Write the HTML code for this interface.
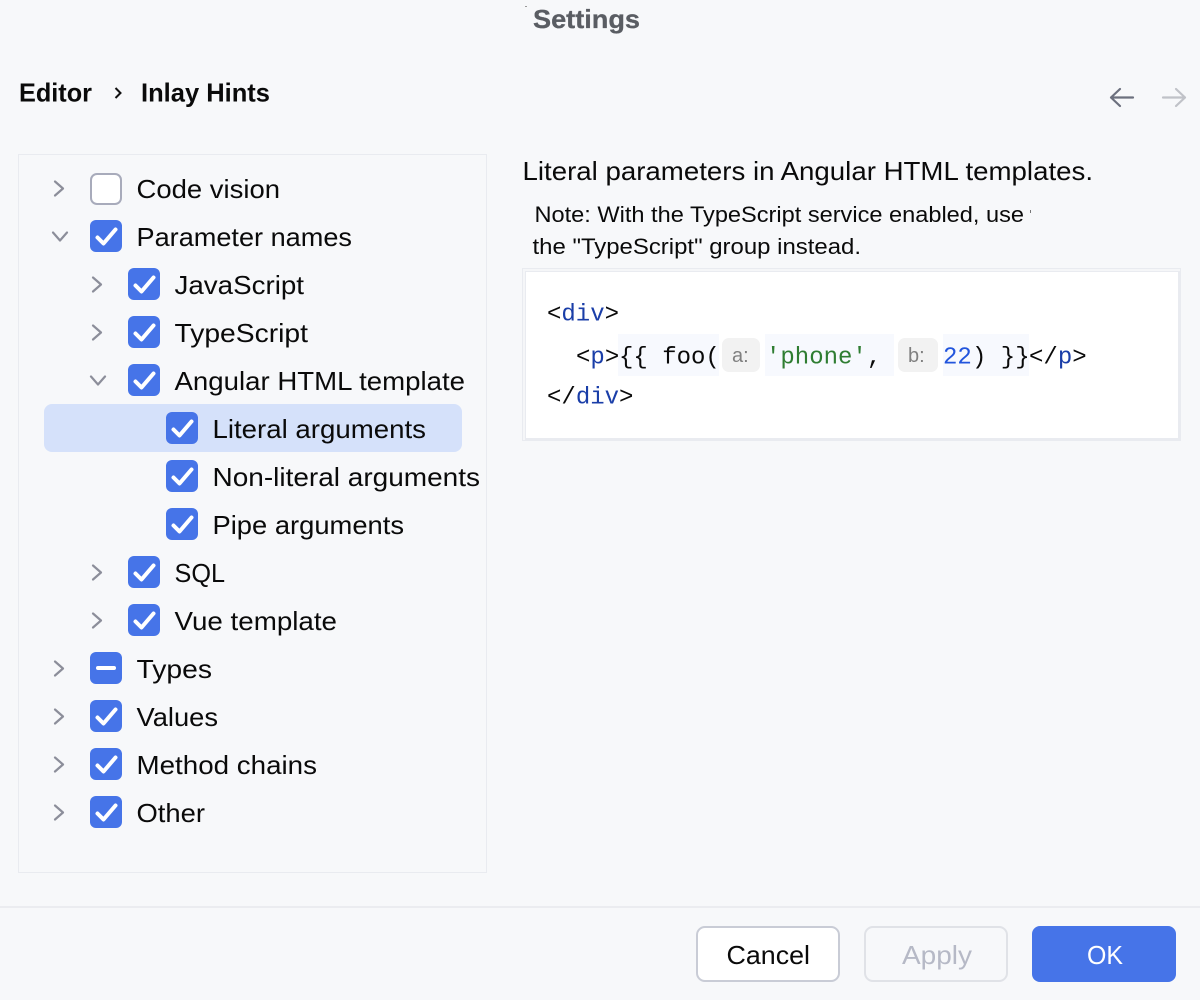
<!DOCTYPE html>
<html><head><meta charset="utf-8"><style>
html,body{margin:0;padding:0;background:#f7f8fa;width:1200px;height:1000px;overflow:hidden}
svg{display:block}
text{font-family:"Liberation Sans",sans-serif;font-size:26px;fill:#0a0a0a}
.m{font-family:"Liberation Mono",monospace;font-size:24px}
.t{fill:#1a3ea8}
.c{fill:none;stroke:#fff;stroke-width:4;stroke-linecap:round;stroke-linejoin:round}
.a{fill:none;stroke:#8c8e9a;stroke-width:2.2;stroke-linecap:round;stroke-linejoin:round}
</style></head><body>
<svg width="1200" height="1000" viewBox="0 0 1200 1000" xmlns="http://www.w3.org/2000/svg">
<defs>
<g id="ck"><rect width="32" height="32" rx="6" fill="#4674e8"/><path class="c" d="M7.500 17.500l6 6L25.500 9.500"/></g>
<path id="r" class="a" d="M-4-7L4 0L-4 7"/>
<path id="d" class="a" d="M-7-4L0 4L7-4"/>
</defs>
<rect width="1200" height="1000" fill="#f7f8fa"/>
<text x="533" y="28" font-weight="700" textLength="107" lengthAdjust="spacingAndGlyphs" style="fill:#5a5d63;stroke:#5a5d63;stroke-width:.3">Settings</text>
<rect x="525" y="6" width="2" height="1" fill="#999"/>
<text x="19" y="101.500" font-weight="700" textLength="73" lengthAdjust="spacingAndGlyphs">Editor</text>
<path d="M115.500 88l5 5-5 5" fill="none" stroke="#111" stroke-width="2"/>
<text x="141" y="101.500" font-weight="700" textLength="129" lengthAdjust="spacingAndGlyphs">Inlay Hints</text>
<path d="M1111 97.500h22M1120 89l-9 8.500 9 8.500" fill="none" stroke="#6c707e" stroke-width="2.200" stroke-linecap="round" stroke-linejoin="round"/>
<path d="M1163 97.500h22M1176 89l9 8.500-9 8.500" fill="none" stroke="#c0c2c8" stroke-width="2.200" stroke-linecap="round" stroke-linejoin="round"/>

<rect x="18.500" y="154.500" width="468" height="718" fill="#f7f8fa" stroke="#e9ebf0"/>
<rect x="44" y="404" width="418" height="48" rx="8" fill="#d5e1fa"/>

<use href="#r" x="59" y="188.500"/>
<rect x="91" y="174" width="30" height="30" rx="6" fill="#fff" stroke="#a8abbb" stroke-width="2"/>
<text x="136.500" y="198" textLength="143.500" lengthAdjust="spacingAndGlyphs">Code vision</text>

<use href="#d" x="60" y="236.500"/>
<use href="#ck" x="90" y="220"/>
<text x="136.500" y="246" textLength="215.500" lengthAdjust="spacingAndGlyphs">Parameter names</text>

<use href="#r" x="97" y="284.500"/>
<use href="#ck" x="128" y="268"/>
<text x="174.500" y="294" textLength="129.500" lengthAdjust="spacingAndGlyphs">JavaScript</text>

<use href="#r" x="97" y="332.500"/>
<use href="#ck" x="128" y="316"/>
<text x="174.500" y="342" textLength="133.500" lengthAdjust="spacingAndGlyphs">TypeScript</text>

<use href="#d" x="98" y="380.500"/>
<use href="#ck" x="128" y="364"/>
<text x="174.500" y="390" textLength="290.500" lengthAdjust="spacingAndGlyphs">Angular HTML template</text>

<use href="#ck" x="166" y="412"/>
<text x="212.500" y="438" textLength="213.500" lengthAdjust="spacingAndGlyphs">Literal arguments</text>

<use href="#ck" x="166" y="460"/>
<text x="212.500" y="486" textLength="267.500" lengthAdjust="spacingAndGlyphs">Non-literal arguments</text>

<use href="#ck" x="166" y="508"/>
<text x="212.500" y="534" textLength="191.500" lengthAdjust="spacingAndGlyphs">Pipe arguments</text>

<use href="#r" x="97" y="572.500"/>
<use href="#ck" x="128" y="556"/>
<text x="174.500" y="582" textLength="50.500" lengthAdjust="spacingAndGlyphs">SQL</text>

<use href="#r" x="97" y="620.500"/>
<use href="#ck" x="128" y="604"/>
<text x="174.500" y="630" textLength="162.500" lengthAdjust="spacingAndGlyphs">Vue template</text>

<use href="#r" x="59" y="668.500"/>
<rect x="90" y="652" width="32" height="32" rx="6" fill="#4674e8"/>
<rect x="96" y="666" width="20" height="4" rx="2" fill="#fff"/>
<text x="136.500" y="678" textLength="75.500" lengthAdjust="spacingAndGlyphs">Types</text>

<use href="#r" x="59" y="716.500"/>
<use href="#ck" x="90" y="700"/>
<text x="136.500" y="726" textLength="81.500" lengthAdjust="spacingAndGlyphs">Values</text>

<use href="#r" x="59" y="764.500"/>
<use href="#ck" x="90" y="748"/>
<text x="136.500" y="774" textLength="180.500" lengthAdjust="spacingAndGlyphs">Method chains</text>

<use href="#r" x="59" y="812.500"/>
<use href="#ck" x="90" y="796"/>
<text x="136.500" y="822" textLength="68.500" lengthAdjust="spacingAndGlyphs">Other</text>

<text x="522.500" y="180" textLength="570.500" lengthAdjust="spacingAndGlyphs">Literal parameters in Angular HTML templates.</text>
<text x="534.500" y="222" style="font-size:22px" textLength="489.500" lengthAdjust="spacingAndGlyphs">Note: With the TypeScript service enabled, use</text>
<rect x="1030" y="210" width="1" height="3" fill="#777"/>
<text x="532.500" y="254" style="font-size:22px" textLength="328.500" lengthAdjust="spacingAndGlyphs">the "TypeScript" group instead.</text>

<rect x="522.500" y="268.500" width="658" height="172" fill="#f5f6f8" stroke="#e9ebf0"/>
<rect x="525" y="271" width="655" height="169" fill="#e9ebf0"/>
<rect x="526" y="272" width="652" height="166" fill="#fff"/>
<rect x="618" y="334" width="101" height="42" fill="#f7f9fe"/>
<rect x="765" y="334" width="129" height="42" fill="#f7f9fe"/>
<rect x="943" y="334" width="86" height="42" fill="#f7f9fe"/>
<rect x="722" y="338" width="38" height="34" rx="7" fill="#f2f2f2"/>
<rect x="898" y="338" width="40" height="34" rx="7" fill="#f2f2f2"/>

<text class="m" x="547" y="320.500">&lt;<tspan class="t">div</tspan>&gt;</text>
<text class="m" x="576" y="363.500">&lt;<tspan class="t">p</tspan>&gt;</text>
<text class="m" x="619" y="363.500">{{ foo(</text>
<text x="732" y="362" style="font-size:20px;fill:#808080">a:</text>
<text class="m" x="766" y="363.500" style="fill:#2f7d32">'phone'</text>
<text class="m" x="867" y="363.500">,</text>
<text x="908" y="362" style="font-size:20px;fill:#808080">b:</text>
<text class="m" x="943" y="363.500" style="fill:#2255dd">22</text>
<text class="m" x="972" y="363.500">) }}</text>
<text class="m" x="1029" y="363.500">&lt;/<tspan class="t">p</tspan>&gt;</text>
<text class="m" x="547" y="403.500">&lt;/<tspan class="t">div</tspan>&gt;</text>

<rect x="0" y="906" width="1200" height="2" fill="#ebecf0"/>
<rect x="697" y="927" width="142" height="54" rx="8" fill="#fff" stroke="#c9ccd6" stroke-width="2"/>
<text x="726.500" y="964" textLength="83.500" lengthAdjust="spacingAndGlyphs">Cancel</text>
<rect x="865" y="927" width="142" height="54" rx="8" fill="#f7f8fa" stroke="#e0e2e7" stroke-width="2"/>
<text x="902" y="964" textLength="70" lengthAdjust="spacingAndGlyphs" style="fill:#b6b9c6">Apply</text>
<rect x="1032" y="926" width="144" height="56" rx="8" fill="#4674e8"/>
<text x="1087" y="964" textLength="36" lengthAdjust="spacingAndGlyphs" style="fill:#fff">OK</text>
</svg>
</body></html>
